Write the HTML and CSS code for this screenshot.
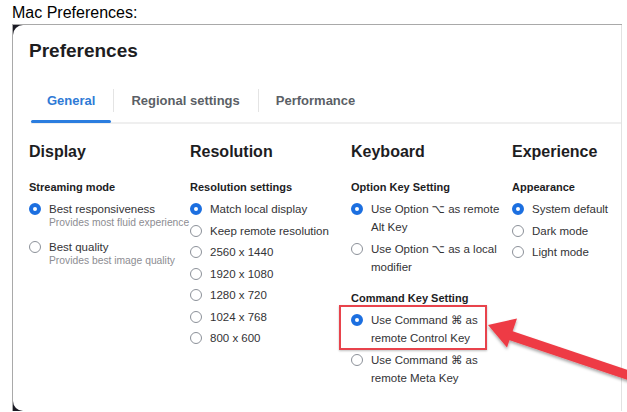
FILE: index.html
```html
<!DOCTYPE html>
<html>
<head>
    <title>Mac Preferences</title>
    <link rel="stylesheet" href="styles.css">
</head>
<body>
    <p class="caption">Mac Preferences:</p>

    <div class="shot">
        <div class="window">
            <h1 class="title">Preferences</h1>

            <div class="tabs">
                <div class="tab active">General</div>
                <div class="tab">Regional settings</div>
                <div class="tab">Performance</div>
            </div>

            <div class="columns">
                <div class="column">
                    <h2>Display</h2>
                    <h3>Streaming mode</h3>
                    <div class="option">
                        <span class="radio on"></span>
                        <div>
                            <div class="label">Best responsiveness</div>
                            <div class="hint">Provides most fluid experience</div>
                        </div>
                    </div>
                    <div class="option">
                        <span class="radio"></span>
                        <div>
                            <div class="label">Best quality</div>
                            <div class="hint">Provides best image quality</div>
                        </div>
                    </div>
                </div>

                <div class="column">
                    <h2>Resolution</h2>
                    <h3>Resolution settings</h3>
                    <div class="option"><span class="radio on"></span><div class="label">Match local display</div></div>
                    <div class="option"><span class="radio"></span><div class="label">Keep remote resolution</div></div>
                    <div class="option"><span class="radio"></span><div class="label">2560 x 1440</div></div>
                    <div class="option"><span class="radio"></span><div class="label">1920 x 1080</div></div>
                    <div class="option"><span class="radio"></span><div class="label">1280 x 720</div></div>
                    <div class="option"><span class="radio"></span><div class="label">1024 x 768</div></div>
                    <div class="option"><span class="radio"></span><div class="label">800 x 600</div></div>
                </div>

                <div class="column">
                    <h2>Keyboard</h2>
                    <h3>Option Key Setting</h3>
                    <div class="option"><span class="radio on"></span><div class="label">Use Option ⌥ as remote<br>Alt Key</div></div>
                    <div class="option"><span class="radio"></span><div class="label">Use Option ⌥ as a local<br>modifier</div></div>

                    <h3 class="gap">Command Key Setting</h3>
                    <div class="option marked"><span class="radio on"></span><div class="label">Use Command ⌘ as<br>remote Control Key</div></div>
                    <div class="option"><span class="radio"></span><div class="label">Use Command ⌘ as<br>remote Meta Key</div></div>
                </div>

                <div class="column">
                    <h2>Experience</h2>
                    <h3>Appearance</h3>
                    <div class="option"><span class="radio on"></span><div class="label">System default</div></div>
                    <div class="option"><span class="radio"></span><div class="label">Dark mode</div></div>
                    <div class="option"><span class="radio"></span><div class="label">Light mode</div></div>
                </div>
            </div>
        </div>
    </div>

    <!-- callout arrow pointing at the command key option -->
    <svg class="arrow" width="627" height="412" viewBox="0 0 627 412">
        <defs>
            <filter id="shade" x="-10%" y="-20%" width="130%" height="160%">
                <feDropShadow dx="0" dy="2" stdDeviation="1.5" flood-color="#000" flood-opacity="0.35"/>
            </filter>
        </defs>
        <g filter="url(#shade)" fill="#ee3b45">
            <polygon points="488,325 517,318.5 507,347.5"/>
            <polygon points="509,330 640,374 637,383 506,339"/>
        </g>
    </svg>
</body>
</html>
```

FILE: styles.css
```css
:root {
    --blue: #1c6fe0;
    --text: #333336;
    --heading: #1d1d1f;
}

body {
    margin: 0;
    padding: 3px 0 0 12px;
    font-family: "Liberation Sans", "DejaVu Sans", Arial, sans-serif;
    background: #fff;
    overflow: hidden;
}

.caption {
    margin: 0 0 1px;
    font-size: 16px;
    line-height: 20px;
    color: #000;
}

.shot {
    width: 609px;
    border-top: 1px solid #a9a9a9;
    border-left: 1px solid #a9a9a9;
    background: #1b1b25;
}

.window {
    height: 386px;
    padding: 14px 0 0 16px;
    box-sizing: border-box;
    background: #fff;
    border-radius: 10px 0 0 10px;
    border-right: 1px solid #e2e2e2;
    overflow: hidden;
}

.title {
    margin: 0;
    font-size: 19px;
    line-height: 24px;
    font-weight: bold;
    color: var(--heading);
}

.tabs {
    display: flex;
    margin: 26px 0 0 2px;
    border-bottom: 2px solid #efefef;
}

.tab {
    position: relative;
    padding: 0 18px 10px;
    font-size: 13px;
    line-height: 23px;
    font-weight: bold;
    color: #5b5f66;
}

.tab:first-child {
    padding-left: 16px;
}

.tab + .tab::before {
    content: "";
    position: absolute;
    left: 0;
    top: 0;
    width: 1px;
    height: 23px;
    background: #e4e4e4;
}

.tab.active {
    color: #2e7ad6;
}

.tab.active::after {
    content: "";
    position: absolute;
    left: 0;
    right: 2px;
    bottom: -1px;
    height: 3px;
    border-radius: 2px;
    background: #2b7ddf;
}

.columns {
    display: grid;
    grid-template-columns: repeat(3, 161px) 1fr;
    margin-top: 18px;
}

.column h2 {
    margin: 0;
    font-size: 16px;
    line-height: 20px;
    color: var(--heading);
}

.column h3 {
    margin: 18px 0 6px;
    font-size: 11px;
    line-height: 14px;
    color: var(--heading);
}

.column h3.gap {
    margin-top: 15.5px;
}

.option {
    position: relative;
    display: flex;
    gap: 8px;
    margin-bottom: 3.5px;
}

.label {
    font-size: 11.5px;
    line-height: 18px;
    color: var(--text);
    white-space: nowrap;
}

.hint {
    margin: -2px 0 0;
    padding-bottom: 4.5px;
    font-size: 10.3px;
    line-height: 14px;
    color: #8d8d92;
    white-space: nowrap;
}

.radio {
    flex: none;
    width: 12px;
    height: 12px;
    margin-top: 3px;
    border: 1.3px solid #8c9199;
    border-radius: 50%;
    box-sizing: border-box;
    background: #fff;
}

.radio.on {
    border: 4px solid var(--blue);
}

/* red highlight box round the chosen command key option */
.option.marked::after {
    content: "";
    position: absolute;
    top: -6px;
    left: -12px;
    width: 148px;
    height: 45px;
    border: 2px solid #e8434c;
    box-sizing: border-box;
    box-shadow: 0 1px 2px rgba(0, 0, 0, 0.25);
}

.arrow {
    position: absolute;
    left: 0;
    top: 0;
    pointer-events: none;
}
```
